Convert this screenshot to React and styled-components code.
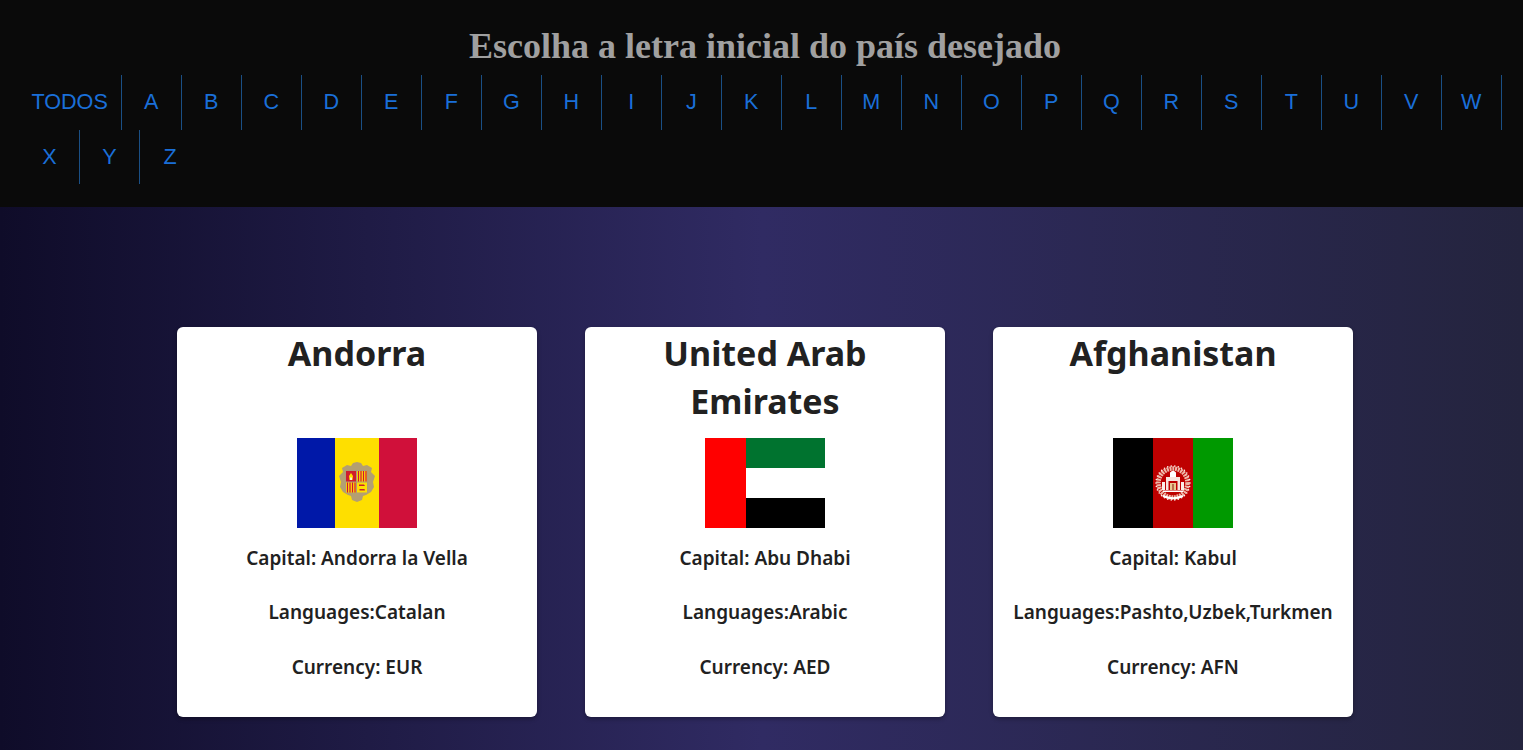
import React from "react";
import styled, { createGlobalStyle } from "styled-components";

const GlobalStyle = createGlobalStyle`
  * {
    box-sizing: border-box;
  }
  html, body {
    margin: 0;
    padding: 0;
  }
  body {
    font-family: "Noto Sans", "Open Sans", sans-serif;
    background: #24243e;
    overflow: hidden;
  }
`;

const Header = styled.header`
  background: #0a0a0a;
  height: 207px;
  padding: 18px 12px 23px 19px;
`;

const Title = styled.h1`
  margin: 0;
  height: 57px;
  line-height: 56px;
  text-align: center;
  font-family: "Liberation Serif", serif;
  font-size: 36px;
  font-weight: 700;
  color: #a0a0a0;
`;

const LetterList = styled.ul`
  display: flex;
  flex-wrap: wrap;
  margin: 0;
  padding: 0 0 0 1px;
  list-style: none;
`;

const LetterItem = styled.li`
  min-width: 60px;
  height: 54.5px;
  padding: 0 12px;
  display: flex;
  align-items: center;
  justify-content: center;
  border-right: 1px solid #1a4f85;
  font-family: "Liberation Sans", sans-serif;
  font-size: 21.6px;
  color: #1a6fd8;

  &:first-child {
    padding: 0 13px 0 11.4px;
  }

  &:last-child {
    border-right: none;
  }
`;

const Main = styled.main`
  height: 543px;
  padding: 120px 12px 33px 19px;
  background: linear-gradient(to right, #0f0c29, #302b63, #24243e);
  display: flex;
  justify-content: center;
  gap: 48px;
`;

const Card = styled.article`
  width: 360px;
  height: 390px;
  background: #fff;
  border-radius: 6px;
  box-shadow: 0 2px 4px rgba(0, 0, 0, 0.3);
  padding: 2px 16px 0;
  display: flex;
  flex-direction: column;
  align-items: center;
  color: #212121;
  text-align: center;
`;

const CountryName = styled.h2`
  margin: 0 0 13px;
  height: 96px;
  font-size: 34px;
  line-height: 48px;
  font-weight: 700;
`;

const FlagBox = styled.svg`
  display: block;
  width: 120px;
  height: 90px;
  margin-bottom: 16.5px;
  flex: none;
`;

const Info = styled.p`
  margin: 0 0 27.5px;
  font-size: 19px;
  line-height: 27px;
  font-weight: 600;
  white-space: nowrap;
`;

const letters = "ABCDEFGHIJKLMNOPQRSTUVWXYZ".split("");

function AndorraFlag() {
  return (
    <FlagBox viewBox="0 0 120 90">
      <rect width="38" height="90" fill="#0018a8" />
      <rect x="38" width="44" height="90" fill="#fedf00" />
      <rect x="82" width="38" height="90" fill="#d0103a" />
      <path
        d="M45 30 L50 27 L54 28 L56 25 L60 24 L64 25 L66 28 L70 27 L75 30 L74 34 L78 38 L76 44 L77 49 L74 54 L69 57 L66 58 L65 62 L60 64 L55 62 L54 58 L51 57 L46 54 L43 49 L44 44 L42 38 L46 34 Z"
        fill="#b39f72"
      />
      <rect x="48.5" y="32.5" width="22" height="22" fill="#a89a7c" />
      <rect x="49" y="33" width="10" height="10.5" fill="#d01c2c" />
      <path d="M54 35 L56 38 L55.5 42 L52.5 42 L52 38 Z" fill="#fedf00" />
      <rect x="53" y="39.5" width="2" height="2.5" fill="#f8f0d8" />
      <rect x="60" y="33" width="10" height="10.5" fill="#fedf00" />
      <path d="M61.5 33v10.5M64 33v10.5M66.5 33v10.5M69 33v10.5" stroke="#d0103a" strokeWidth="1.2" />
      <rect x="49" y="44.5" width="10" height="10" fill="#fedf00" />
      <path d="M50.5 44.5v10M53 44.5v10M55.5 44.5v10M58 44.5v10" stroke="#d0103a" strokeWidth="1.2" />
      <rect x="60" y="44.5" width="10" height="10" fill="#fedf00" />
      <path d="M62 46.5h5l1 1.5h-6zM62.5 51h5l.5 1.5h-5.5z" fill="#c8202c" />
    </FlagBox>
  );
}

function EmiratesFlag() {
  return (
    <FlagBox viewBox="0 0 120 90">
      <rect x="41" width="79" height="30" fill="#00732f" />
      <rect x="41" y="30" width="79" height="30" fill="#fff" />
      <rect x="41" y="60" width="79" height="30" fill="#000" />
      <rect width="41" height="90" fill="#f00" />
    </FlagBox>
  );
}

function AfghanistanFlag() {
  const dots = Array.from({ length: 30 }, (_, i) => (i * Math.PI * 2) / 30);
  return (
    <FlagBox viewBox="0 0 120 90">
      <rect width="40" height="90" fill="#000" />
      <rect x="40" width="40" height="90" fill="#be0000" />
      <rect x="80" width="40" height="90" fill="#009900" />
      <circle cx="60" cy="45" r="14.5" fill="none" stroke="#eeb8a8" strokeWidth="4.5" strokeDasharray="2 0.8" />
      {dots.map((a) => (
        <circle key={a} cx={60 + Math.cos(a) * 17} cy={45 + Math.sin(a) * 17} r="0.8" fill="#fbeee8" />
      ))}
      <path d="M57 39 L57 34.5 Q60 31 63 34.5 L63 39 Z" fill="#fff" />
      <rect x="53" y="39" width="14" height="13" fill="#f7e4de" />
      <rect x="49" y="44" width="3" height="8" fill="#fbeee8" />
      <rect x="68" y="44" width="3" height="8" fill="#fbeee8" />
      <rect x="55.5" y="43" width="9" height="9" fill="#be0000" />
      <path d="M57 52 L57 45 L63 45 L63 52 Z" fill="#e8c890" />
      <rect x="59.4" y="46" width="1.2" height="6" fill="#a03020" />
      <rect x="50" y="52.5" width="20" height="1.5" fill="#fff" />
      <path d="M50 58 Q60 62.5 70 58" fill="none" stroke="#fff" strokeWidth="2.2" />
    </FlagBox>
  );
}

const countries = [
  { name: "Andorra", capital: "Andorra la Vella", languages: "Catalan", currency: "EUR", Flag: AndorraFlag },
  { name: "United Arab Emirates", capital: "Abu Dhabi", languages: "Arabic", currency: "AED", Flag: EmiratesFlag },
  { name: "Afghanistan", capital: "Kabul", languages: "Pashto,Uzbek,Turkmen", currency: "AFN", Flag: AfghanistanFlag },
];

export default function App() {
  return (
    <>
      <GlobalStyle />
      <Header>
        <Title>Escolha a letra inicial do país desejado</Title>
        <LetterList>
          <LetterItem>TODOS</LetterItem>
          {letters.map((letter) => (
            <LetterItem key={letter}>{letter}</LetterItem>
          ))}
        </LetterList>
      </Header>
      <Main>
        {countries.map(({ name, capital, languages, currency, Flag }) => (
          <Card key={name}>
            <CountryName>{name}</CountryName>
            <Flag />
            <Info>Capital: {capital}</Info>
            <Info>Languages:{languages}</Info>
            <Info>Currency: {currency}</Info>
          </Card>
        ))}
      </Main>
    </>
  );
}
